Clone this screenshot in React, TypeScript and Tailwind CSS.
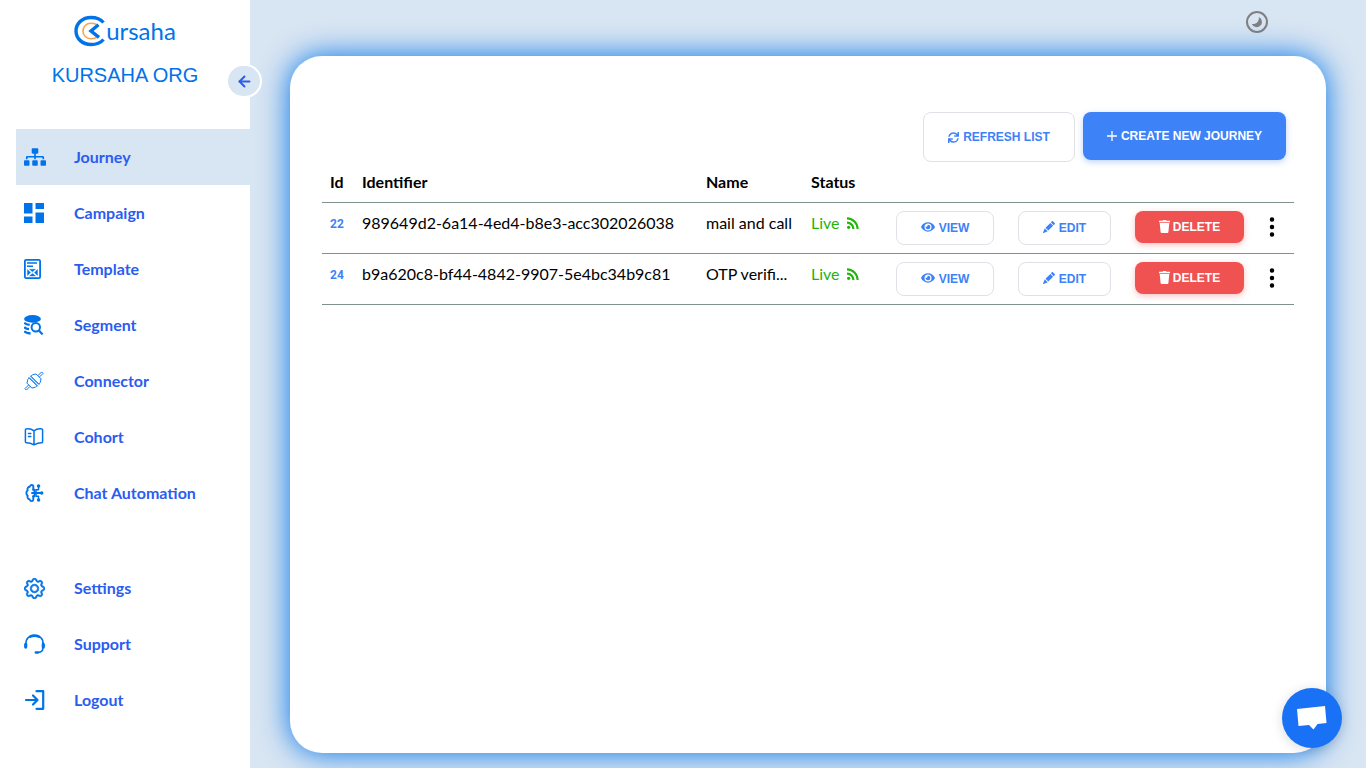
import type { ReactNode } from "react";
import { FaEye, FaSitemap, FaSync } from "react-icons/fa";
import { BsGear, BsPencilFill, BsThreeDotsVertical } from "react-icons/bs";
import { MdRssFeed } from "react-icons/md";
import { ArrowLeft } from "lucide-react";

function Logo() {
  return (
    <svg width="32" height="32" viewBox="0 0 32 32" fill="none" aria-hidden="true">
      <path d="M29.500 7.500C26.500 4 22 2.500 17 2.500 8.500 2.500 2 8.300 2 16s6.500 13.500 15 13.500c5 0 9.500-1.500 12.500-5" stroke="#0073e9" strokeWidth="3.400" />
      <path d="M22.500 9.500C20.800 8.500 19 8.200 16.800 8.200 12.300 8.200 9 11.600 9 16s3.300 7.800 7.800 7.800c2.200 0 4-.3 5.700-1.300" stroke="#f7a64a" strokeWidth="1.600" />
      <path d="M24.500 9.800L17 16l8 6.300" stroke="#0073e9" strokeWidth="3.400" />
    </svg>
  );
}

function CampaignIcon() {
  return (
    <svg width="20" height="20" viewBox="0 0 20 20" fill="currentColor" aria-hidden="true">
      <path d="M0 0h8.5v10.5H0zM11.5 0H20v6h-8.500zM11.500 9.500H20V20h-8.500zM0 13.500h8.500V20H0z" />
    </svg>
  );
}

function TemplateIcon() {
  return (
    <svg width="18" height="20" viewBox="0 0 18 20" fill="none" stroke="currentColor" aria-hidden="true">
      <rect x="0.9" y="0.9" width="15.200" height="18.200" rx="1.200" strokeWidth="1.800" />
      <path d="M3 4h10M3 7.200h6" strokeWidth="1.600" />
      <path d="M3.500 10.500v6l3-3zM13.500 10.500v6l-3-3z" fill="currentColor" strokeWidth="0.400" />
      <path d="M5.500 10.300h6l-3 2.500zM5.500 16.900h6l-3-2.500z" fill="currentColor" strokeWidth="0.400" />
    </svg>
  );
}

function SegmentIcon() {
  return (
    <svg width="20" height="20" viewBox="0 0 20 20" fill="none" stroke="currentColor" aria-hidden="true">
      <ellipse cx="8.500" cy="3.900" rx="8.400" ry="3.800" fill="currentColor" stroke="none" />
      <path d="M.2 7.600c1 1.300 3 2 5.500 2.200M.2 12c.9 1.100 2.700 1.900 4.800 2.200M.2 16.200c1.300 1.500 3.500 2.200 6.400 2.300" strokeWidth="2.300" />
      <circle cx="11.800" cy="12.300" r="4.200" strokeWidth="2" />
      <path d="M14.900 15.500l3.700 3.900" strokeWidth="2.200" />
    </svg>
  );
}

function ConnectorIcon() {
  return (
    <svg width="20" height="20" viewBox="0 0 20 20" fill="none" stroke="currentColor" strokeWidth="0.900" aria-hidden="true">
      <g transform="rotate(45 10 10)">
        <path d="M9 3.500V-1.800h2v5.300M9 16.500v5.300h2v-5.300" />
        <path d="M4.500 8.900V6.800l2-3.300h7l2 3.300v2.100zM4.500 11.100v2.100l2 3.300h7l2-3.300v-2.100z" />
        <path d="M3.600 8.900h12.800M3.600 11.100h12.800" />
      </g>
    </svg>
  );
}

function CohortIcon() {
  return (
    <svg width="20" height="20" viewBox="0 0 20 20" fill="none" stroke="currentColor" strokeWidth="1.500" strokeLinejoin="round" strokeLinecap="round" aria-hidden="true">
      <path d="M10 3.800C7.800 2 4.800 1.400 2.500 1.800c-.7.100-1.100.5-1.100 1.100v11.800c0 .7.400 1 1 1 2.800 0 5.300.8 7.600 2.100 2.300-1.300 4.800-2.100 7.600-2.100.6 0 1-.3 1-1V2.900c0-.6-.4-1-1.100-1.100-2.300-.4-5.300.2-7.500 2zM10 3.800v14M4.500 6.500h2.300M4.500 9.500h2.300" />
    </svg>
  );
}

function AutomationIcon() {
  return (
    <svg width="20" height="20" viewBox="0 0 20 20" fill="none" stroke="currentColor" strokeWidth="1.900" strokeLinecap="round" strokeLinejoin="round" aria-hidden="true">
      <path d="M9.300 6V3.200C9 1.500 6.300 1.500 5.700 3.700 3.700 4 3 5.800 3.700 7.300 1.900 8.600 1.900 11.400 3.700 12.700c-.7 1.800.2 3.500 2 3.800.6 2 3.300 2.200 3.600.2V14" />
      <path d="M8 10h9.500M9 6.700h1.500V10M9 13.300h1.500V10" />
      <path d="M12 6.800h2.500V3.200M12 13.200h2.500v3.600M12 6.800v6.400" strokeWidth="1.500" />
      <circle cx="14.600" cy="2.900" r=".8" fill="currentColor" />
      <circle cx="17.700" cy="10" r=".8" fill="currentColor" />
      <circle cx="14.600" cy="17" r=".8" fill="currentColor" />
    </svg>
  );
}

function SupportIcon() {
  return (
    <svg width="22" height="20" viewBox="0 0 22 20" fill="none" stroke="currentColor" strokeLinecap="round" aria-hidden="true">
      <path d="M2 10.500C1.400 4 5.500 1.700 10.500 1.700S19.600 4 19 10.500" strokeWidth="1.600" />
      <path d="M6 2.700c3-1.500 6-1.500 9 0" strokeWidth="2.600" />
      <path d="M1.700 10.300v2.800M19.300 10.300v2.800" strokeWidth="3.200" />
      <path d="M18.800 9v5.500c0 2.400-2 3.700-4.600 3.900" strokeWidth="1.600" />
      <path d="M11.800 18.500h2" strokeWidth="2.400" />
    </svg>
  );
}

function LogoutIcon() {
  return (
    <svg width="22" height="20" viewBox="0 0 22 20" fill="none" stroke="currentColor" strokeWidth="2.200" strokeLinecap="round" strokeLinejoin="round" aria-hidden="true">
      <path d="M2 10h11M9 5.500l4.500 4.500L9 14.500M12.500 1.200h6.700v17.600h-6.700" />
    </svg>
  );
}

function ThemeIcon() {
  return (
    <svg width="22" height="22" viewBox="0 0 22 22" aria-hidden="true">
      <circle cx="11" cy="11" r="10" fill="none" stroke="#808080" strokeWidth="2" />
      <path d="M12.800 6a5.300 5.300 0 1 1-7 7c4 .8 7.800-2.500 7-7z" fill="#808080" />
    </svg>
  );
}

function TrashIcon() {
  return (
    <svg width="11" height="13" viewBox="0 0 11 13" fill="currentColor" aria-hidden="true">
      <path d="M0 .8h3.500L4 0h3l.5.800H11v1.400H0zM.7 3h9.600L9.400 12c-.1.600-.4 1-1 1H2.600c-.6 0-.9-.4-1-1z" />
    </svg>
  );
}

type Item = { label: string; icon: ReactNode };

const mainItems: Item[] = [
  { label: "Journey", icon: <FaSitemap size={22} /> },
  { label: "Campaign", icon: <CampaignIcon /> },
  { label: "Template", icon: <TemplateIcon /> },
  { label: "Segment", icon: <SegmentIcon /> },
  { label: "Connector", icon: <ConnectorIcon /> },
  { label: "Cohort", icon: <CohortIcon /> },
  { label: "Chat Automation", icon: <AutomationIcon /> },
];

const footerItems: Item[] = [
  { label: "Settings", icon: <BsGear size={21} strokeWidth={0.6} /> },
  { label: "Support", icon: <SupportIcon /> },
  { label: "Logout", icon: <LogoutIcon /> },
];

function NavList({ items, active }: { items: Item[]; active?: string }) {
  return (
    <ul>
      {items.map(({ label, icon }) => (
        <li key={label}>
          <a
            href="#"
            aria-current={label === active ? "page" : undefined}
            className={`flex h-14 items-center pl-2 font-bold text-[#2b5cf0] ${label === active ? "bg-[#d8e5f2]" : ""}`}
          >
            <span className="w-[50px] text-[#0073e9]">{icon}</span>
            {label}
          </a>
        </li>
      ))}
    </ul>
  );
}

const journeys = [
  { id: 22, identifier: "989649d2-6a14-4ed4-b8e3-acc302026038", name: "mail and call" },
  { id: 24, identifier: "b9a620c8-bf44-4842-9907-5e4bc34b9c81", name: "OTP verifi..." },
];

const outline =
  "flex h-[34px] w-full items-center justify-center gap-1 rounded-lg border border-[#e0e1e6] bg-white font-['Liberation_Sans',sans-serif] text-xs font-bold text-[#3e82f7] [&>svg]:mb-0.5";

export default function App() {
  return (
    <div className="flex min-h-screen bg-[#d8e5f2] font-[Lato,sans-serif] text-base text-black">
      <aside className="relative w-[250px] shrink-0 bg-white pl-4">
        <header className="flex h-[129px] flex-col items-center pt-[15px] pr-4 text-[#0073e9]">
          <div className="flex h-8 items-center text-2xl">
            <Logo />
            <span>ursaha</span>
          </div>
          <p className="mt-3 font-['Liberation_Sans',sans-serif] text-xl leading-8">KURSAHA ORG</p>
        </header>
        <button
          aria-label="Collapse sidebar"
          className="absolute top-16 -right-3 flex h-[34px] w-9 items-center justify-center rounded-full border-2 border-white bg-[#d8e5f2] text-[#2b5cf0]"
        >
          <ArrowLeft size={17} strokeWidth={2.8} />
        </button>
        <nav>
          <NavList items={mainItems} active="Journey" />
          <div className="mt-[39px]">
            <NavList items={footerItems} />
          </div>
        </nav>
      </aside>

      <main className="flex min-w-0 flex-1 flex-col px-10 pb-[15px]">
        <div className="flex h-14 shrink-0 justify-end pt-[11px] pr-[58px]">
          <button aria-label="Toggle dark mode" className="size-[22px]">
            <ThemeIcon />
          </button>
        </div>
        <section className="flex-1 rounded-[32px] bg-white px-8 pt-14 shadow-[0_0_30px_#0073e9]">
          <div className="flex items-start justify-end gap-2 pr-2 font-['Liberation_Sans',sans-serif] text-xs font-bold">
            <button className="flex h-[50px] w-[152px] items-center justify-center gap-1 rounded-lg border border-[#e0e1e6] text-[#3e82f7]">
              <FaSync size={11} />
              REFRESH LIST
            </button>
            <button className="flex h-12 w-[203px] items-center justify-center gap-1 rounded-lg bg-[#3e82f7] text-white shadow-[0_2px_6px_rgba(62,130,247,0.35)]">
              <svg width="10" height="10" viewBox="0 0 10 10" stroke="currentColor" strokeWidth="1.300" aria-hidden="true">
                <path d="M5 0v10M0 5h10" />
              </svg>
              CREATE NEW JOURNEY
            </button>
          </div>

          <table className="w-full table-fixed border-separate border-spacing-0 text-left [&_td]:border-b [&_td]:border-[#80908f] [&_th]:border-b [&_th]:border-[#80908f]">
            <colgroup>
              <col className="w-8" />
              <col />
              <col className="w-[105px]" />
              <col className="w-[81px]" />
              <col className="w-[122px]" />
              <col className="w-[117px]" />
              <col className="w-[133px]" />
              <col className="w-[38px]" />
            </colgroup>
            <thead>
              <tr className="h-[41px]">
                <th className="pl-2">Id</th>
                <th className="pl-2">Identifier</th>
                <th className="pl-2">Name</th>
                <th className="pl-2">Status</th>
                <th colSpan={4} aria-label="Actions" />
              </tr>
            </thead>
            <tbody>
              {journeys.map((j) => (
                <tr key={j.id} className="h-[51px] align-top">
                  <td className="pt-[13px] pl-2 font-[Roboto,sans-serif] text-xs leading-4 font-bold text-[#3e82f7]">{j.id}</td>
                  <td className="pt-2 pl-2">{j.identifier}</td>
                  <td className="pt-2 pl-2 whitespace-nowrap">{j.name}</td>
                  <td className="pt-2 pl-2 text-[#1fb50a]">
                    <span className="flex items-center gap-1">
                      Live <MdRssFeed size={18} />
                    </span>
                  </td>
                  <td className="px-3 pt-2">
                    <button className={outline}>
                      <FaEye size={14} />
                      VIEW
                    </button>
                  </td>
                  <td className="px-3 pt-2">
                    <button className={outline}>
                      <BsPencilFill size={12} />
                      EDIT
                    </button>
                  </td>
                  <td className="px-3 pt-2">
                    <button className="flex h-8 w-full items-center justify-center gap-[3px] rounded-lg bg-[#f05252] font-['Liberation_Sans',sans-serif] text-xs font-bold text-white shadow-[0_2px_6px_rgba(240,82,82,0.35)] [&>svg]:mb-0.5">
                      <TrashIcon />
                      DELETE
                    </button>
                  </td>
                  <td className="pt-3">
                    <button aria-label={`More actions for ${j.name}`} className="flex w-8 justify-center">
                      <BsThreeDotsVertical size={24} />
                    </button>
                  </td>
                </tr>
              ))}
            </tbody>
          </table>
        </section>
      </main>

      <button
        aria-label="Open chat"
        className="fixed right-6 bottom-5 flex size-[60px] items-center justify-center rounded-full bg-[#1972f5] shadow-[0_2px_12px_rgba(0,0,0,0.15)]"
      >
        <svg width="30" height="26" viewBox="0 0 30 26" fill="#fff" aria-hidden="true">
          <path d="M0 4L28 1l1.500 17-9 1-4 5.500-4.500-4.500L1.500 21z" />
        </svg>
      </button>
    </div>
  );
}
